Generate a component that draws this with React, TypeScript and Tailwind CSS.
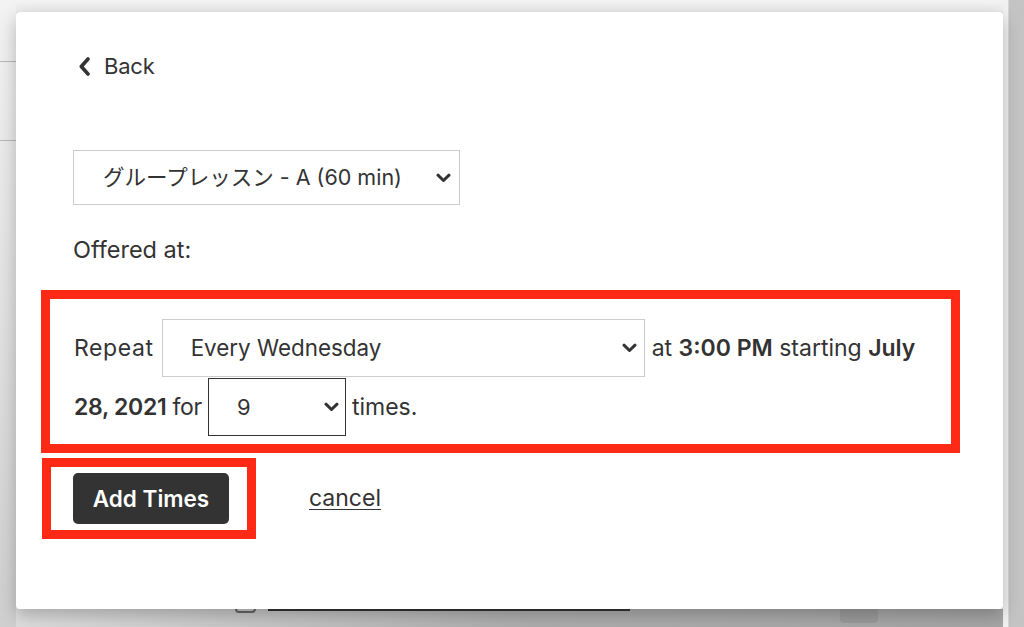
import React from 'react';

const font = { fontFamily: 'Inter, "Noto Sans CJK JP", sans-serif' };

const ChevronDown = () => (
  <svg width="15" height="10" viewBox="0 0 15 10" fill="none">
    <path d="M2 2.2 L7.5 7.5 L13 2.2" stroke="#333" strokeWidth="3" strokeLinecap="round" strokeLinejoin="round" />
  </svg>
);

interface SelectBoxProps {
  label: string;
  className: string;
}

const SelectBox: React.FC<SelectBoxProps> = ({ label, className }) => (
  <div className={`flex items-center justify-between bg-white ${className}`}>
    <span className="whitespace-nowrap">{label}</span>
    <ChevronDown />
  </div>
);

export default function App() {
  return (
    <div className="w-[1024px] h-[627px] flex overflow-hidden bg-[#e4e4e4] text-[#333]" style={font}>
      {/* left edge of page below the overlay */}
      <div className="w-[16px] flex flex-col bg-gradient-to-b from-[#f3f3f3] via-[#e2e2e2] to-[#cfcfcf]">
        <div className="h-[61px]" />
        <div className="h-px bg-[#b9b9b9]" />
        <div className="h-[78px]" />
        <div className="h-px bg-[#b9b9b9]" />
      </div>

      <div className="flex-1 flex flex-col">
        <div className="h-[12px] bg-gradient-to-b from-[#f4f4f4] to-[#ececec]" />

        <div className="h-[597px] bg-white rounded-[4px] shadow-[0_6px_18px_rgba(0,0,0,0.25)] pl-[57px] pt-[42px] relative z-10">
          <div className="h-[24px] flex items-center text-[22px]">
            <svg className="ml-[5px]" width="13" height="19" viewBox="0 0 13 19" fill="none">
              <path d="M10 2 L3.3 9.5 L10 17" stroke="#333" strokeWidth="3.6" strokeLinecap="round" strokeLinejoin="round" />
            </svg>
            <span className="ml-[13px] tracking-[-0.2px]">Back</span>
          </div>

          <SelectBox
            label="グループレッスン - A (60 min)"
            className="mt-[72px] w-[387px] h-[55px] border border-[#cccccc] pl-[29px] pr-[8px] text-[21.5px]"
          />

          <div className="mt-[33px] h-[24px] flex items-center text-[23.5px]">Offered at:</div>

          <div className="mt-[28px] -ml-[32px] w-[919px] border-[9px] border-[#fe2a16] pl-[24px] pt-[20px] pb-[8px] text-[23px]">
            <div className="h-[58px] flex items-center">
              <span className="tracking-[0.6px]">Repeat</span>
              <SelectBox
                label="Every Wednesday"
                className="ml-[8px] w-[483px] h-[58px] border border-[#cccccc] pl-[28px] pr-[7px] text-[22.4px]"
              />
              <span className="ml-[7px] whitespace-nowrap">
                at <b className="font-semibold">3:00 PM</b> starting <b className="font-semibold">July</b>
              </span>
            </div>
            <div className="mt-px h-[58px] flex items-center">
              <span className="whitespace-nowrap tracking-[-0.3px]">
                <b className="font-semibold">28, 2021</b> for
              </span>
              <SelectBox
                label="9"
                className="ml-[6px] w-[138px] h-[58px] border-[1.5px] border-[#333] pl-[28px] pr-[6px] text-[22px]"
              />
              <span className="ml-[6px]">times.</span>
            </div>
          </div>

          <div className="mt-[5px] flex items-center">
            <div className="-ml-[31px] border-[9px] border-[#fe2a16] pl-[22px] pr-[18px] py-[6px]">
              <button className="w-[156px] h-[51px] rounded-[5px] bg-[#333] text-white text-[22.5px] font-semibold">
                Add Times
              </button>
            </div>
            <a className="ml-[53px] text-[23px] underline decoration-1 underline-offset-[3px]">cancel</a>
          </div>
        </div>

        {/* page peeking out under the modal */}
        <div className="flex-1 flex bg-gradient-to-r from-[#dedede] via-[#afafaf] to-[#a6a6a6]">
          <div className="w-[219px]" />
          <div className="w-[21px] h-[4px] border-2 border-t-0 border-[#666] rounded-b-[4px]" />
          <div className="ml-[12px] w-[362px] h-[2px] bg-[#333]" />
          <div className="ml-[210px] w-[38px] h-[14px] rounded-b-[4px] bg-[#9c9c9c]" />
        </div>
      </div>

      <div className="w-[21px] flex">
        <div className="w-[5px] bg-[#f2f2f2]" />
        <div className="w-px bg-[#d6d6d6]" />
        <div className="flex-1 bg-[#c4c4c4]" />
      </div>
    </div>
  );
}
